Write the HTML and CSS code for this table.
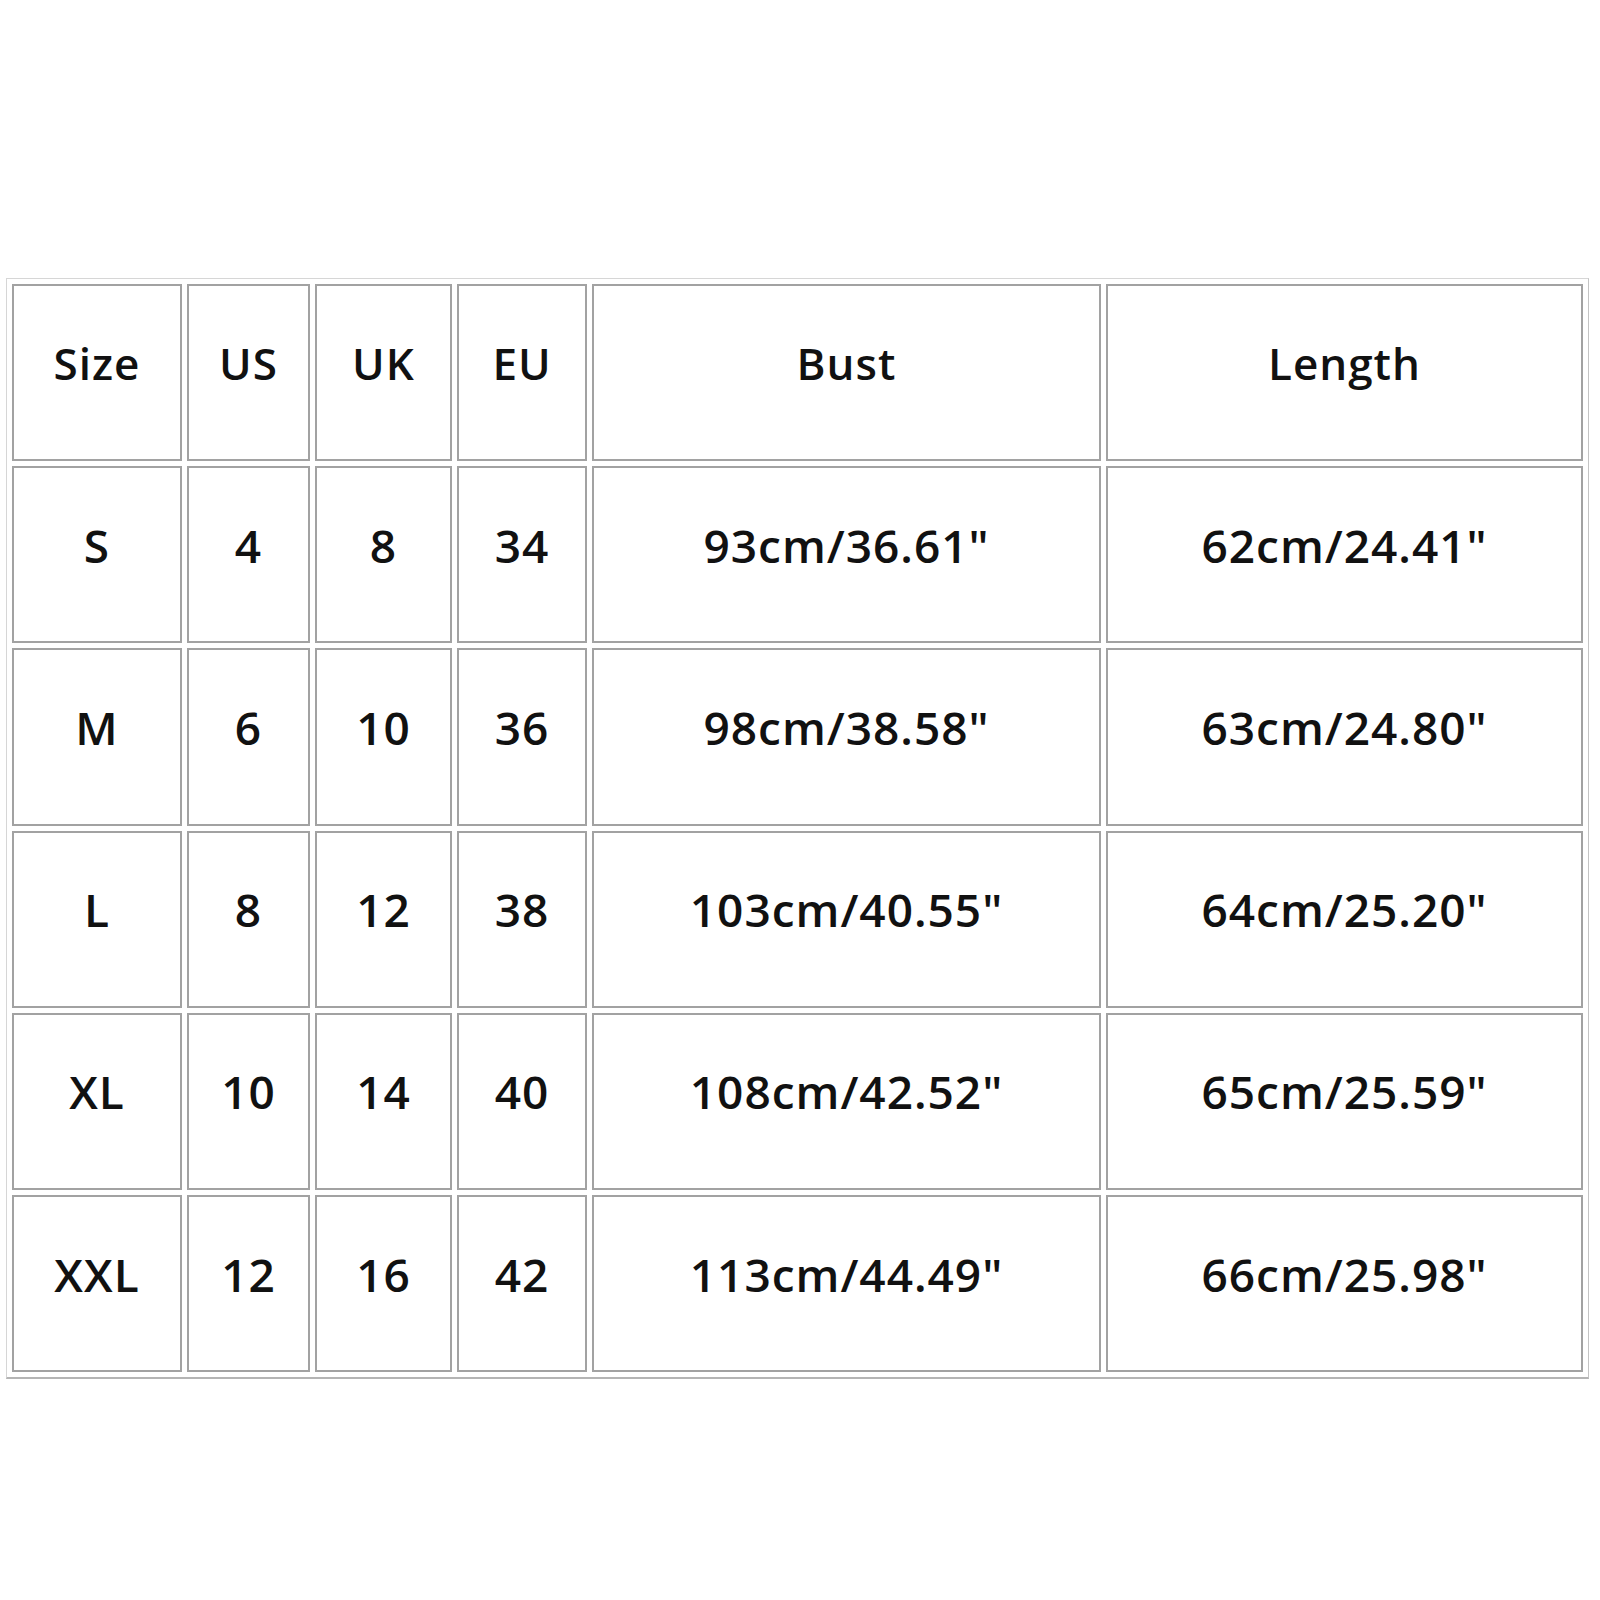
FILE: index.html
```html
<!DOCTYPE html>
<html lang="en">
<head>
<meta charset="utf-8">
<title>Size Chart</title>
<link rel="stylesheet" href="styles.css">
</head>
<body>
<div class="page">
  <table class="chart">
    <colgroup>
      <col class="c-size">
      <col class="c-us">
      <col class="c-uk">
      <col class="c-eu">
      <col class="c-bust">
      <col class="c-len">
    </colgroup>
    <tr class="head"><td>Size</td><td>US</td><td>UK</td><td>EU</td><td>Bust</td><td>Length</td></tr>
    <tr><td>S</td><td>4</td><td>8</td><td>34</td><td>93cm/36.61"</td><td>62cm/24.41"</td></tr>
    <tr><td>M</td><td>6</td><td>10</td><td>36</td><td>98cm/38.58"</td><td>63cm/24.80"</td></tr>
    <tr><td>L</td><td>8</td><td>12</td><td>38</td><td>103cm/40.55"</td><td>64cm/25.20"</td></tr>
    <tr><td>XL</td><td>10</td><td>14</td><td>40</td><td>108cm/42.52"</td><td>65cm/25.59"</td></tr>
    <tr><td>XXL</td><td>12</td><td>16</td><td>42</td><td>113cm/44.49"</td><td>66cm/25.98"</td></tr>
  </table>
</div>
</body>
</html>
```

FILE: styles.css
```css
html, body {
  margin: 0;
  padding: 0;
  background: #ffffff;
}

.page {
  padding: 278px 0 0 6px;
}

.chart {
  border-collapse: separate;
  border-spacing: 5px;
  border: 1px solid #d6d6d6;
  border-bottom: 2px solid #b4b4b4;
  border-right: 1px solid #c4c4c4;
  table-layout: fixed;
  font-family: "Open Sans", "DejaVu Sans", sans-serif;
  font-weight: 600;
  font-size: 46px;
  letter-spacing: 1px;
  color: #111111;
}

.c-size { width: 170px; }
.c-us { width: 123px; }
.c-uk { width: 137px; }
.c-eu { width: 130px; }
.c-bust { width: 509px; }
.c-len { width: 477px; }

.chart td {
  height: 177.2px;
  padding: 0 0 20px 0;
  border: 2px solid #a2a2a2;
  text-align: center;
  vertical-align: middle;
  white-space: nowrap;
  box-sizing: border-box;
}

.chart .head td {
  font-size: 44px;
  padding-bottom: 20px;
}
```
